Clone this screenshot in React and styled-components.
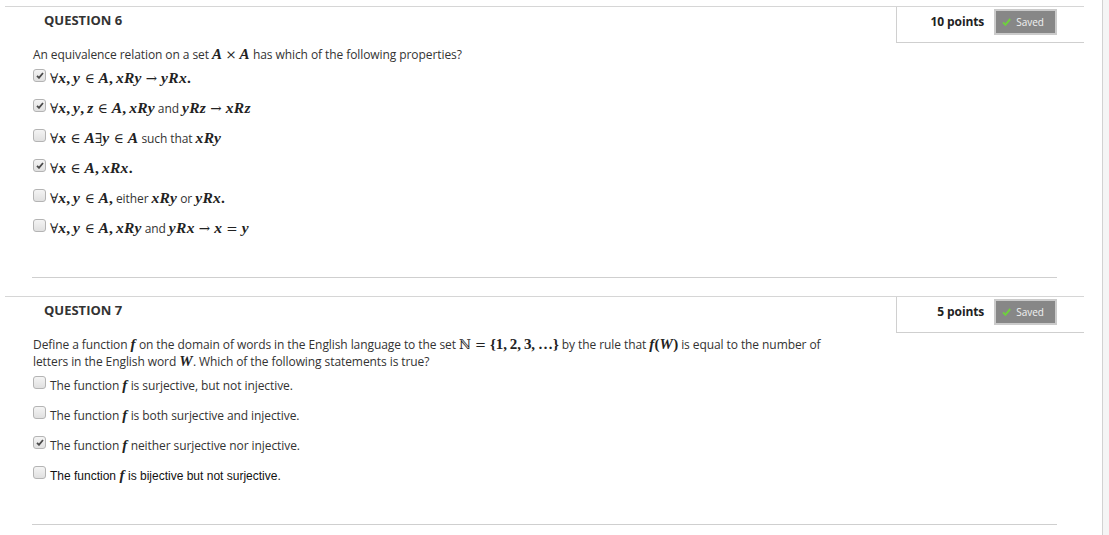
import React from 'react';
import styled, { createGlobalStyle } from 'styled-components';

const GlobalStyle = createGlobalStyle`
  html, body {
    margin: 0;
    padding: 0;
    background: #ffffff;
  }
  body {
    font-family: "Open Sans", "Liberation Sans", Arial, sans-serif;
    color: #333;
  }
`;

const Page = styled.div`
  display: flex;
  min-height: 535px;
  background: #fff;
`;

const Main = styled.main`
  flex: 1;
  padding: 6px 18px 0 5px;
`;

const Rail = styled.aside`
  width: 6px;
  border-left: 1px solid #d2d2d2;
  background: #f5f5f5;
`;

const Block = styled.section`
  border-top: 1px solid #d6d6d6;
  & + & {
    margin-top: 18px;
  }
`;

const Head = styled.div`
  display: flex;
  justify-content: space-between;
  height: 36px;
`;

const Title = styled.h3`
  margin: 0;
  padding: 4px 0 0 39px;
  font-size: 13px;
  font-weight: 700;
  color: #333;
`;

const PointsBox = styled.div`
  width: 160px;
  border-left: 1px solid #d0d0d0;
  border-bottom: 1px solid #cfcfcf;
  display: flex;
  align-items: flex-start;
  justify-content: flex-end;
  gap: 10px;
  padding: 2px 27px 0 0;
`;

const Points = styled.span`
  font-size: 12px;
  font-weight: 700;
  color: #222;
  line-height: 26px;
  letter-spacing: -0.1px;
`;

const Saved = styled.span`
  display: inline-flex;
  align-items: center;
  gap: 5px;
  height: 22px;
  padding: 0 11px 0 6px;
  background: #878787;
  border: 2px solid #cbcbcb;
  color: #f2f2f2;
  font-size: 10px;
`;

const Body = styled.div`
  margin: 0 27px;
  padding: 3px 0 34px 1px;
  border-bottom: 1px solid #cfcfcf;
`;

const Prompt = styled.p`
  margin: 0;
  font-size: 12px;
  line-height: 17px;
  color: #333;
  letter-spacing: -0.08px;
`;

const Options = styled.ul`
  list-style: none;
  margin: 0;
  padding: 0;
`;

const Option = styled.li`
  display: flex;
  align-items: center;
  height: 30px;
  gap: 4px;
  font-size: 12px;
  font-family: ${p => (p.$arial ? '"Liberation Sans", Arial, sans-serif' : '"Open Sans", sans-serif')};
  color: ${p => (p.$arial ? '#111' : '#333')};
  letter-spacing: ${p => (p.$arial ? '0' : '-0.08px')};
`;

const Box = styled.span`
  flex: none;
  width: 11px;
  height: 11px;
  margin-bottom: 6px;
  border: 1px solid #b4b4b4;
  border-radius: 3px;
  background: linear-gradient(#f4f4f4, #e0e0e0);
  display: flex;
  align-items: center;
  justify-content: center;
`;

const Math = styled.span`
  font-family: "Liberation Serif", "Times New Roman", serif;
  font-size: ${p => (p.$small ? '15px' : '15.5px')};
  color: #222;
  white-space: nowrap;
`;

const V = styled.span`
  font-style: italic;
  font-weight: 700;
  letter-spacing: 0.3px;
`;

const S = styled.span`
  font-style: normal;
  font-family: ${p => (p.$sym ? '"DejaVu Serif", serif' : 'inherit')};
  font-size: ${p => (p.$sym ? '0.88em' : 'inherit')};
  padding: 0 ${p => (p.$rel ? '0.3em' : p.$bin ? '0.24em' : '0')};
  padding-right: ${p => (p.$comma ? '0.2em' : undefined)};
  font-weight: ${p => (p.$bold ? 700 : 400)};
`;

const Check = () => (
  <svg width="8" height="7" viewBox="0 0 8 7">
    <path d="M1 3.8 L3 5.8 L7 1" fill="none" stroke="#4a4a4a" strokeWidth="1.8" />
  </svg>
);

const CheckBox = ({ on }) => <Box>{on && <Check />}</Box>;

const GreenTick = () => (
  <svg width="9" height="8" viewBox="0 0 9 8">
    <path d="M1 4.4 L3.4 6.8 L8.2 1" fill="none" stroke="#6fcf3f" strokeWidth="2" />
  </svg>
);

const Header = ({ title, points }) => (
  <Head>
    <Title>{title}</Title>
    <PointsBox>
      <Points>{points}</Points>
      <Saved>
        <GreenTick />
        Saved
      </Saved>
    </PointsBox>
  </Head>
);

const Comma = () => <S $comma $bold>,</S>;
const Rel = ({ children }) => <S $sym $rel>{children}</S>;

const q6 = [
  {
    on: true,
    body: (
      <Math>
        <S $sym>∀</S><V>x</V><Comma /><V>y</V><Rel>∈</Rel><V>A</V><Comma /><V>xRy</V><Rel>→</Rel><V>yRx</V><S $bold>.</S>
      </Math>
    ),
  },
  {
    on: true,
    body: (
      <>
        <Math>
          <S $sym>∀</S><V>x</V><Comma /><V>y</V><Comma /><V>z</V><Rel>∈</Rel><V>A</V><Comma /><V>xRy</V>
        </Math>
        &nbsp;and&nbsp;
        <Math>
          <V>yRz</V><Rel>→</Rel><V>xRz</V>
        </Math>
      </>
    ),
  },
  {
    on: false,
    body: (
      <>
        <Math>
          <S $sym>∀</S><V>x</V><Rel>∈</Rel><V>A</V><S $sym>∃</S><V>y</V><Rel>∈</Rel><V>A</V>
        </Math>
        &nbsp;such that&nbsp;
        <Math><V>xRy</V></Math>
      </>
    ),
  },
  {
    on: true,
    body: (
      <Math>
        <S $sym>∀</S><V>x</V><Rel>∈</Rel><V>A</V><Comma /><V>xRx</V><S $bold>.</S>
      </Math>
    ),
  },
  {
    on: false,
    body: (
      <>
        <Math>
          <S $sym>∀</S><V>x</V><Comma /><V>y</V><Rel>∈</Rel><V>A</V><S $bold>,</S>
        </Math>
        &nbsp;either&nbsp;
        <Math><V>xRy</V></Math>
        &nbsp;or&nbsp;
        <Math><V>yRx</V><S $bold>.</S></Math>
      </>
    ),
  },
  {
    on: false,
    body: (
      <>
        <Math>
          <S $sym>∀</S><V>x</V><Comma /><V>y</V><Rel>∈</Rel><V>A</V><Comma /><V>xRy</V>
        </Math>
        &nbsp;and&nbsp;
        <Math>
          <V>yRx</V><Rel>→</Rel><V>x</V><Rel>=</Rel><V>y</V>
        </Math>
      </>
    ),
  },
];

const F = () => <Math $small><V>f</V></Math>;

const q7 = [
  { on: false, body: <>The function&nbsp;<F />&nbsp;is surjective, but not injective.</> },
  { on: false, body: <>The function&nbsp;<F />&nbsp;is both surjective and injective.</> },
  { on: true, body: <>The function&nbsp;<F />&nbsp;neither surjective nor injective.</> },
  { on: false, arial: true, body: <>The function&nbsp;<F />&nbsp;is bijective but not surjective.</> },
];

export default function App() {
  return (
    <Page>
      <GlobalStyle />
      <Main>
        <Block>
          <Header title="QUESTION 6" points="10 points" />
          <Body>
            <Prompt>
              An equivalence relation on a set{' '}
              <Math $small><V>A</V><S $sym $bin>×</S><V>A</V></Math>{' '}
              has which of the following properties?
            </Prompt>
            <Options>
              {q6.map((o, i) => (
                <Option key={i}>
                  <CheckBox on={o.on} />
                  <span>{o.body}</span>
                </Option>
              ))}
            </Options>
          </Body>
        </Block>

        <Block>
          <Header title="QUESTION 7" points="5 points" />
          <Body>
            <Prompt>
              Define a function <F /> on the domain of words in the English language to the set{' '}
              <Math $small>
                <S $sym>ℕ</S><Rel>=</Rel><S $bold>{'{'}1</S><Comma /><S $bold>2</S><Comma /><S $bold>3</S><Comma /><S $bold>…{'}'}</S>
              </Math>{' '}
              by the rule that{' '}
              <Math $small><V>f</V><S $bold>(</S><V>W</V><S $bold>)</S></Math>{' '}
              is equal to the number of
              <br />
              letters in the English word <Math $small><V>W</V></Math>. Which of the following statements is true?
            </Prompt>
            <Options>
              {q7.map((o, i) => (
                <Option key={i} $arial={o.arial}>
                  <CheckBox on={o.on} />
                  <span>{o.body}</span>
                </Option>
              ))}
            </Options>
          </Body>
        </Block>
      </Main>
      <Rail />
    </Page>
  );
}
